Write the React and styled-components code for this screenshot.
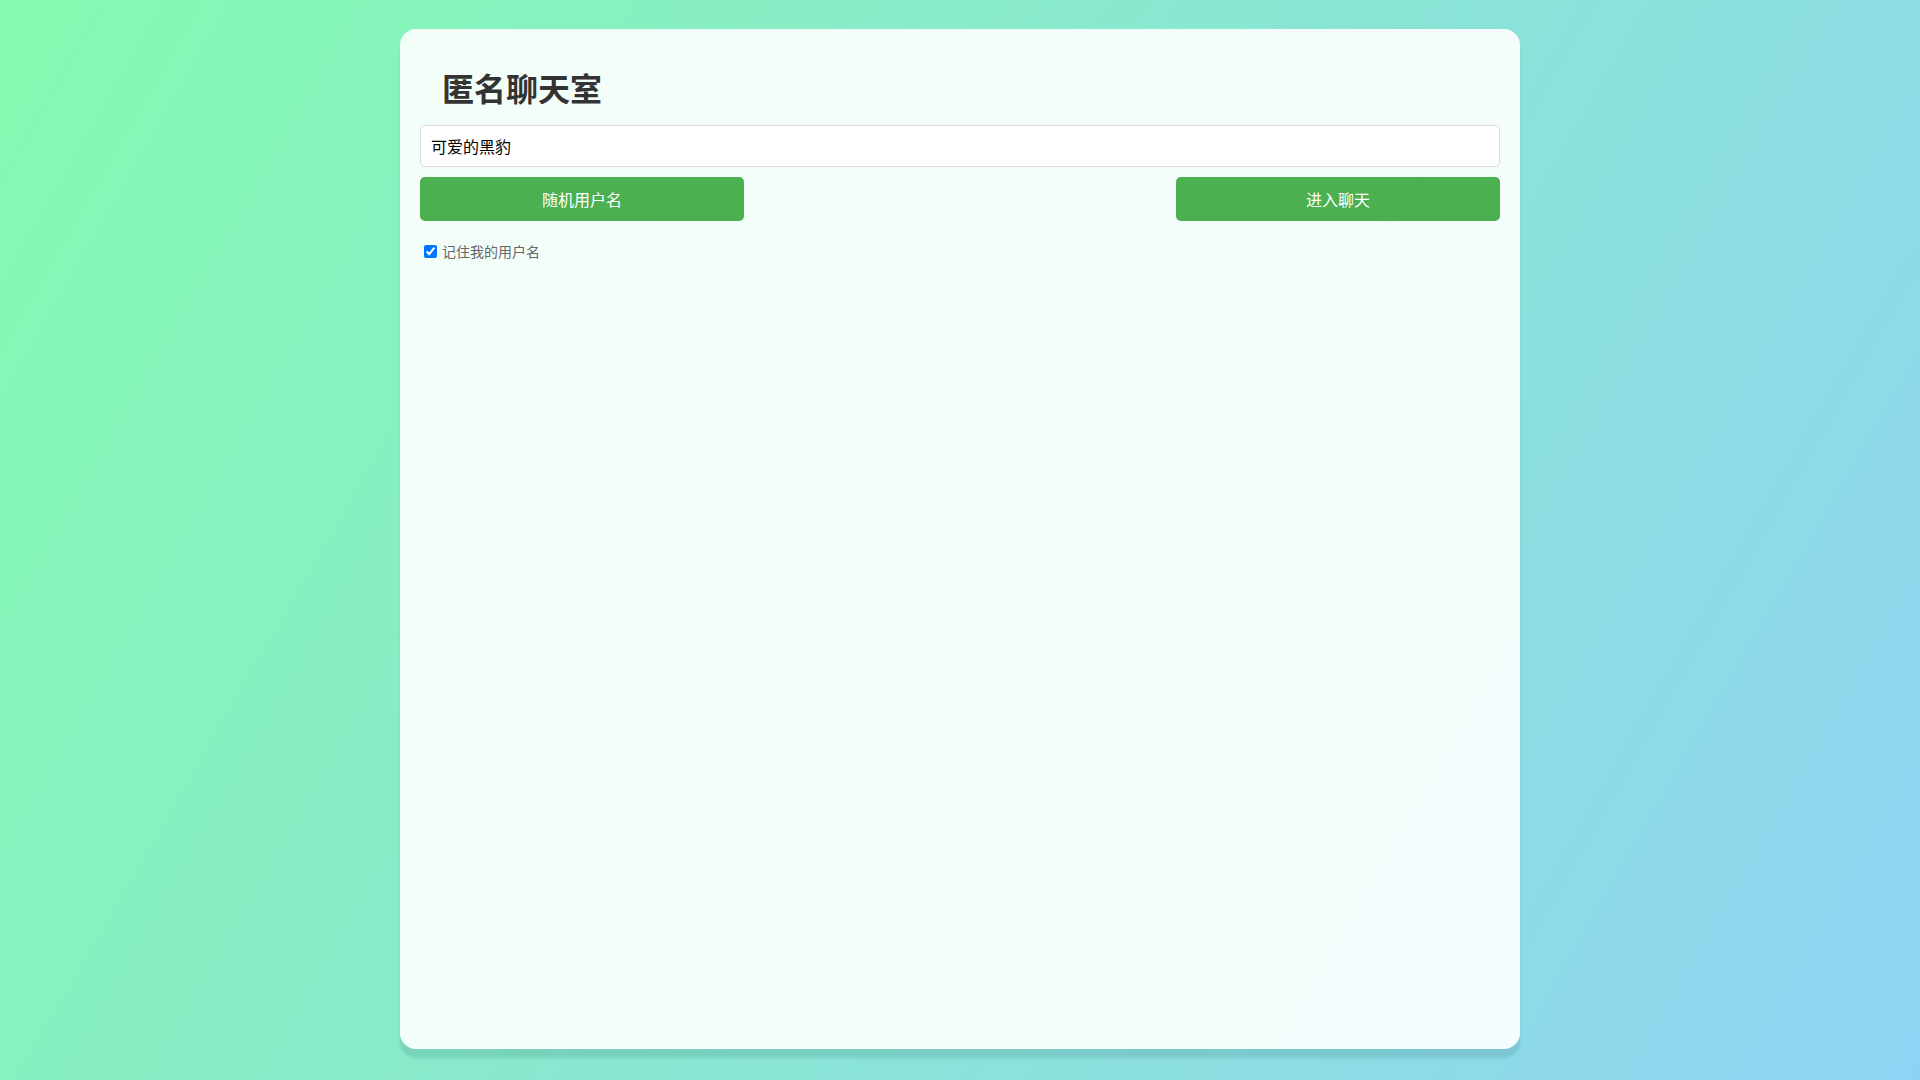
import React, { useState } from "react";
import styled, { createGlobalStyle } from "styled-components";

const Global = createGlobalStyle`
  html, body { margin: 0; padding: 0; }
  body {
    min-height: 1080px;
    background: linear-gradient(120deg, #84fab0 0%, #8fd3f4 100%);
    font-family: "Noto Sans CJK SC", "Noto Sans", sans-serif;
  }
`;

const Page = styled.div`
  display: flex;
  justify-content: center;
  padding-top: 29px;
  height: 1080px;
  box-sizing: border-box;
`;

const Card = styled.div`
  width: 1120px;
  height: 1020px;
  box-sizing: border-box;
  padding: 20px;
  border-radius: 16px;
  background: rgba(255, 255, 255, 0.9);
  box-shadow: 0 9px 3px rgba(0, 60, 60, 0.12);
  display: flex;
  flex-direction: column;
`;

const Title = styled.h1`
  margin: 0 0 0 22px;
  height: 76px;
  display: flex;
  align-items: center;
  font-size: 32px;
  font-weight: 700;
  color: #333;
`;

const Input = styled.input`
  height: 42px;
  box-sizing: border-box;
  border: 1px solid #ddd;
  border-radius: 5px;
  padding: 0 10px;
  font-size: 16px;
  font-family: inherit;
  color: #000;
  background: #fff;
`;

const Row = styled.div`
  display: flex;
  justify-content: space-between;
  margin-top: 10px;
`;

const Button = styled.button`
  width: 324px;
  height: 44px;
  border: none;
  border-radius: 5px;
  background: #4caf50;
  color: #fff;
  font-size: 16px;
  font-family: inherit;
`;

const Remember = styled.label`
  display: flex;
  align-items: center;
  gap: 5px;
  margin-top: 20px;
  margin-left: 4px;
  font-size: 14px;
  color: #666;
  input { margin: 0; width: 13px; height: 13px; }
`;

export default function App() {
  const [name, setName] = useState("可爱的黑豹");
  return (
    <>
      <Global />
      <Page>
        <Card>
          <Title>匿名聊天室</Title>
          <Input value={name} onChange={(e) => setName(e.target.value)} />
          <Row>
            <Button>随机用户名</Button>
            <Button>进入聊天</Button>
          </Row>
          <Remember>
            <input type="checkbox" defaultChecked />
            记住我的用户名
          </Remember>
        </Card>
      </Page>
    </>
  );
}
